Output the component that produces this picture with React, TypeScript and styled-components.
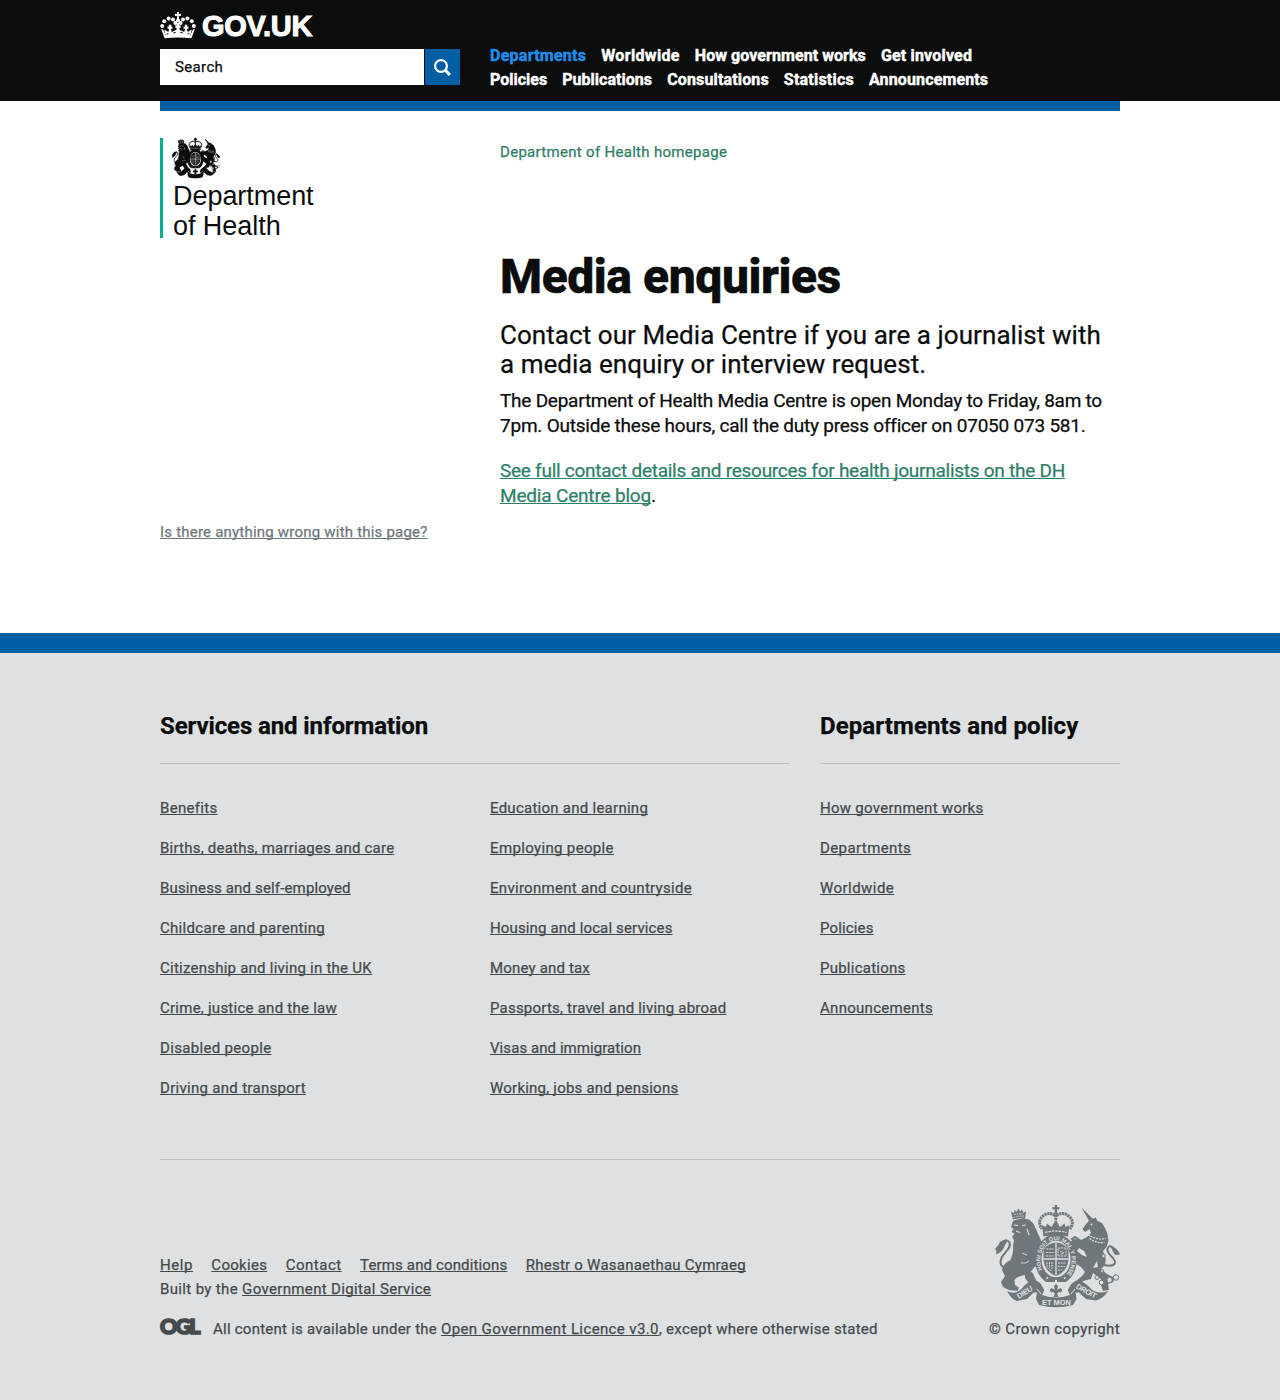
import React from "react";
import styled, { createGlobalStyle } from "styled-components";

const GlobalStyle = createGlobalStyle`
  * { box-sizing: border-box; }
  body {
    margin: 0;
    background: #fff;
    color: #0b0c0c;
    font-family: Roboto, "Liberation Sans", sans-serif;
    -webkit-text-stroke: 0.25px;
  }
  a { color: inherit; }
  ul { list-style: none; margin: 0; padding: 0; }
`;

type Label = [text: string, track: number];

const Track = styled.span<{ $track: number }>`
  letter-spacing: ${(p) => p.$track}px;
  white-space: nowrap;
`;

const Link = styled.a<{ $track?: number; $plain?: boolean }>`
  letter-spacing: ${(p) => p.$track ?? 0}px;
  white-space: nowrap;
  text-decoration: ${(p) => (p.$plain ? "none" : "underline")};
  text-decoration-thickness: 1px;
  text-underline-offset: 1px;
  text-decoration-skip-ink: none;
`;

/* ---------- header ---------- */

const Header = styled.header`
  height: 101px;
  background: #0b0c0c;
  color: #fff;
`;

const Width = styled.div`
  width: 960px;
  margin: 0 auto;
`;

const HeaderInner = styled(Width)`
  display: flex;
  gap: 30px;
`;

const Brand = styled.div`
  width: 300px;
  padding-top: 12px;
`;

const Logo = styled.a`
  display: flex;
  gap: 6px;
  height: 37px;
  color: #fff;
  text-decoration: none;
`;

const LogoText = styled.span`
  font: bold 29px/29px "Liberation Sans", Arial, sans-serif;
  letter-spacing: -0.25px;
  -webkit-text-stroke: 1px #fff;
`;

const SearchForm = styled.form`
  display: flex;
  gap: 1px;
  height: 36px;
`;

const SearchField = styled.div`
  flex: 1;
  padding-left: 15px;
  background: #fff;
  color: #0b0c0c;
  font-size: 15px;
  line-height: 36px;
`;

const SearchButton = styled.button`
  display: flex;
  align-items: center;
  justify-content: center;
  width: 35px;
  padding: 0;
  border: 0;
  background: #005ea5;
`;

const Nav = styled.nav`
  padding-top: 44px;
`;

const NavRow = styled.ul`
  display: flex;
  gap: 15px;
  height: 24px;
  font-size: 16px;
  font-weight: 700;
  line-height: 24px;
`;

const NavItem = styled.li<{ $active: boolean }>`
  color: ${(p) => (p.$active ? "#1d8feb" : "#fff")};
  -webkit-text-stroke-width: 0.45px;
`;

const BlueBar = styled(Width)`
  height: 10px;
  background: #005ea5;
`;

/* ---------- content ---------- */

const Main = styled.main`
  width: 960px;
  height: 522px;
  margin: 0 auto;
  padding-top: 27px;
`;

const Columns = styled.div`
  display: flex;
  height: 382px;
`;

const Side = styled.div`
  width: 340px;
`;

const Department = styled.div`
  display: flex;
  flex-direction: column;
  height: 100px;
  padding-left: 9px;
  border-left: 3px solid #00ad93;
`;

const DepartmentName = styled.div`
  padding: 3px 0 0 1px;
  font: 27px/30px "Liberation Sans", Arial, sans-serif;
  letter-spacing: -0.05px;
  -webkit-text-stroke: 0;
`;

const Article = styled.article`
  width: 620px;
`;

const Crumb = styled.div`
  padding-top: 2px;
  height: 114px;
  color: #2e7d66;
  font-size: 15px;
  line-height: 24px;
`;

const Title = styled.h1`
  margin: 0 0 19px;
  font-size: 48px;
  font-weight: 800;
  line-height: 50px;
  -webkit-text-stroke-width: 0.6px;
`;

const Lead = styled.p`
  margin: 0 0 9px;
  font-size: 26px;
  line-height: 29px;
`;

const Body = styled.p`
  margin: 0 0 20px;
  font-size: 19px;
  line-height: 25px;

  a { color: #2e8068; }
`;

const Feedback = styled.div`
  color: #6f777b;
  font-size: 15px;
  line-height: 24px;
`;

/* ---------- footer ---------- */

const Footer = styled.footer`
  height: 767px;
  padding-top: 58px;
  border-top: 20px solid #005ea5;
  background: #dee0e2;
  color: #454a4c;
  font-size: 15px;
  line-height: 24px;
`;

const Sections = styled.div`
  display: grid;
  grid-template-columns: 630px 300px;
  column-gap: 30px;
  height: 449px;
  border-bottom: 1px solid #bfc1c3;
`;

const SectionTitle = styled.h2`
  height: 53px;
  margin: 0 0 32px;
  border-bottom: 1px solid #bfc1c3;
  color: #0b0c0c;
  font-size: 24px;
  font-weight: 700;
  line-height: 30px;
`;

const Lists = styled.div`
  display: grid;
  grid-template-columns: repeat(2, 300px);
  column-gap: 30px;
`;

const Item = styled.li`
  height: 40px;
`;

const Meta = styled.div`
  display: flex;
  justify-content: space-between;
  padding-top: 45px;
`;

const MetaLeft = styled.div`
  padding-top: 48px;
`;

const MetaLinks = styled.ul`
  display: flex;
  gap: 18.4px;
`;

const Licence = styled.div`
  display: flex;
  gap: 12px;
  margin-top: 16px;
`;

const Ogl = styled.span`
  width: 41px;
  font: 900 21.5px/19px Lato, sans-serif;
  letter-spacing: -1.9px;
  -webkit-text-stroke: 1.7px #454a4c;
`;

const MetaRight = styled.div`
  display: flex;
  flex-direction: column;
  align-items: flex-end;
  gap: 10px;
`;

/* ---------- drawings ---------- */

const Arms = styled.svg`
  flex: none;
  overflow: visible;
  -webkit-text-stroke: 0;
`;

const Crown = () => (
  <svg width="36" height="27" viewBox="0 0 36 27" fill="#fff">
    <path d="M16.9 0h2.2l-.4 2.1 2.3-.4v2.4l-2.3-.4.5 3.6h-2.4l.5-3.6-2.3.4V1.7l2.3.4z" />
    {[[2.2, 14], [4.2, 9.2], [8.6, 6.5], [13, 7.6], [15.4, 11], [33.8, 14], [31.8, 9.2], [27.4, 6.5], [23, 7.6], [20.6, 11]].map(
      ([x, y]) => (
        <circle key={`${x}`} cx={x} cy={y} r="2" />
      )
    )}
    <circle cx="18" cy="8.5" r="1.9" />
    <path d="M1 16.5l2.4 1.6L6 24.3q12-1.7 24 0l2.6-6.2 2.4-1.6-3.6 9.7q-13.4-1.6-26.8 0z" />
    <path d="M4.2 17.5l4.2 2.6.7-3.3-1.5.3v-2.8l1.5.4-.5-2h2.8l-.5 2 1.5-.4v2.8l-1.5-.3.8 3.3 4.5-2 .6-2.3-1.4.3v-3l1.5.4-.5-2.4h3.2l-.5 2.4 1.5-.4v3l-1.4-.3.6 2.3 4.5 2 .8-3.3-1.5.3v-2.8l1.5.4-.5-2h2.8l-.5 2 1.5-.4v2.8l-1.5-.3.7 3.3 4.2-2.6-1.7 7.5q-12.2-1.7-24.4 0z" />
    <path d="M6.2 22.6l1.2-1.6 1.6 1.1zM12.7 21.3l1.9-1.6 1.7 1.4zM29.8 22.6l-1.2-1.6-1.6 1.1zM23.3 21.3l-1.9-1.6-1.7 1.4z" fill="#0b0c0c" />
  </svg>
);

const Magnifier = () => (
  <svg width="17" height="17" viewBox="0 0 17 17" fill="none" stroke="#fff">
    <circle cx="7" cy="7" r="5.9" strokeWidth="2.2" />
    <path d="M11.2 11.2l4.7 4.7" strokeWidth="3" />
  </svg>
);

type ArmsProps = { width: number; height: number; ink: string; paper: string; motto?: boolean };

const RoyalArms = ({ width, height, ink, paper, motto }: ArmsProps) => (
  <Arms width={width} height={height} viewBox="0 0 125 102" preserveAspectRatio="none" fill={ink} stroke={motto ? "none" : ink} strokeWidth={motto ? 0 : 1.4}>
    <defs>
      <path id="garter-line" d="M47.3 64.5A15.6 19.8 0 1 1 74.7 64.5L72 69" />
    </defs>

    {/* lion */}
    <path d="M18 14.5L16 6.5l3 1.8.6-3.3 2.2 1.8 1.4-3.3 2 3 2-2.3.9 3.5 2.9-1.2-1 7.5q-6-1.5-12 .5z" />
    <path d="M18.5 12.6q5-1.9 10.5-1.5M19.5 9.5l8-.9" stroke={paper} strokeWidth=".9" strokeDasharray="1.5 .8" fill="none" />
    <path d="M17 19L18 16Q25 12.5 34 14.5L38 18L41 24L43 29L45.5 34L47 39L44.5 46L42 51L46 56L47 64L40 61.5L38 64Q35.5 68 30.5 70Q22 71 19.5 75L20 80L24 82.5L22.5 86L14 85L8 82L6 77L10 71L7 65Q8.500 58 15.5 55Q19 48 18 41L19 35L17 32L19.5 28.5L16.5 27L18.5 24L16 22z" />
    <path d="M30 67Q38 65 39 71L42 77L46 80L42 83L35 79.5L30 73z" />
    <path d="M19 20l4 .5M27 20.5l3.5-.5M21 26l4 1.5M32 24l2 6" stroke={paper} strokeWidth="1.1" />
    <path d="M26 58q5 1 8-2M27 48l5 2" stroke={paper} strokeWidth=".9" fill="none" />
    <path d="M12 63Q3 62 6.5 53C9 47 17 43 14.5 37.5Q12 33.5 8 37" fill="none" stroke={ink} strokeWidth="2" />
    <path d="M12.5 36Q5 34 4 39L0 44L1.5 46L1 49.5Q8 47 10 40z" />

    {/* unicorn */}
    <path d="M86.5 2.5L98.5 14.5L95 17.5z" />
    <path d="M94.5 15L101 12.5L102 15.5L107 18L110 23L112.5 29L113.5 36L111.5 42L108 46L110.5 53Q111.5 60 106 64L112 69L120 73L118 77L113 79L114 85L108 86L106 80L108 76L102 71L98 68L96 74L88 76L86 80L78 81.5L81 76L87 71L90 67L86 62L80 58L77 50L73 46L76 42L73 38L80 34L86 35L92 32L96 28L94.5 24L90 27L87.5 24L91.5 18.5z" />
    <path d="M84 43l5 3 3 6-5-2-5-4zM98 63l4-7 1 6z" fill={paper} stroke="none" />
    <path d="M93 29.5q8 6 18 4M94.5 33.5q7 5 15 4" fill="none" stroke={paper} strokeWidth="1.2" strokeDasharray="2 1" />
    <circle cx="96.5" cy="19.5" r=".9" fill={paper} stroke="none" />
    <path d="M80 52L72 47L73 42M82 38L77 34L80 32L86 36" stroke={ink} strokeWidth="2" fill="none" />
    <path d="M109 60Q118 62 120 58C121 53 111 49 112.5 44Q114 39 118 43L119 47" fill="none" stroke={ink} strokeWidth="2" />
    <path d="M115 40Q122 43 125 49Q122 51 119 49Q118 44 115 42z" />
    <g fill={paper} stroke={ink} strokeWidth="1">
      <circle cx="102" cy="72.5" r="2" />
      <circle cx="106.5" cy="77.5" r="2.3" />
      <circle cx="114.5" cy="75" r="2.7" />
      <circle cx="121" cy="72.5" r="2.7" />
      <circle cx="108.5" cy="51" r="1.7" />
      <circle cx="107" cy="66" r="1.5" />
    </g>

    {/* crown */}
    <path d="M59.5 0h2.8l-.3 2.3 2.3-.3v2.6l-2.3-.3.3 3.5h-2.8l.4-3.5-2.5.3V2l2.5.3z" />
    <g fill="none" stroke={ink}>
      <path d="M60 10.5Q54 6.5 48.5 10.5Q41.5 16 47 24M61.5 10.5Q68 6.5 73 10.5Q80.5 16 75 24" strokeWidth="3" strokeDasharray="2.3 .6" />
      <path d="M60.8 7v15" strokeWidth="2.8" strokeDasharray="2.3 .6" />
    </g>
    <path d="M47 20l4 2 1-3.5 2.5 2 2 1.5 2.8-4.5h3L65 22l2-1.5 2.5-2 1 3.5 4-2-1.5 11.5q-12-3-24.5 0z" />
    <path d="M50 27.5q11-3 21.5 0" stroke={paper} strokeWidth="1.2" fill="none" strokeDasharray="2.5 .9" />

    {/* garter and shield */}
    <ellipse cx="61" cy="54.5" rx="21" ry="25.5" />
    <ellipse cx="61" cy="54" rx="14.5" ry="18.3" fill={paper} stroke="none" />
    <path d="M48.5 45Q53 37.5 61 37.5T73.5 45V55Q72 67 61 71Q50 67 48.5 55z" />
    <path d="M61 38V70M48.5 54H73.5" stroke={paper} strokeWidth="1.3" />
    <g fill="none" stroke={paper} strokeWidth=".9">
      <path d="M51 44h8M51 47.5h8M51 51h8M63 51v-8h8v8zM65 46l4 2-4 1.5M63 58h8M63 61.5h7M63 65h4M52 57v5q2 3 5 4M54.5 57v6M57 57v7" strokeDasharray="2 .7" />
    </g>
    <path d="M51.5 72.5l1.5 1M60 76h2M69 73.5l1.5-1" stroke={paper} strokeWidth="1.8" />
    {motto && (
      <text fill={paper} fontFamily="Liberation Sans, sans-serif" fontWeight="700" fontSize="5.7">
        <textPath href="#garter-line">HONI SOIT QUI MAL Y PENSE</textPath>
      </text>
    )}

    {/* scroll */}
    <path d="M12 86Q19 90 26 84.5Q32 76.5 39 75.5Q45 76 47 81L51 88.5H71L75 81Q78 76 83 75.5Q90 76.5 96 84Q103 90 113 86Q108 94 101 95.5L91 94L84 87.5L80.5 87.5L81.5 94L78 100Q61 104.5 44 100L41 94L42 87.5L38.5 87.5L32 94L22 96Q16 94 12 86z" />
    <path d="M47 90Q61 95 75 90L73 86V77H49V86z" fill={paper} stroke="none" />
    <path d="M42 84l4 5M80 84l-4 5" stroke={paper} strokeWidth="1" />
    <path d="M61 78.5l2 3-.8 3.3q4.3-3.3 5 .5-.5 3-3 1.7L62 88.5l1.500 3.5h-5l1.500-3.5-2.2-1.500q-2.500 1.300-3-1.700.7-3.800 5-.5L59 81.500z" />
    {motto && (
      <g fill={paper} fontFamily="Liberation Sans, sans-serif" fontWeight="700" fontSize="7.5">
        <text x="47" y="100.3" textLength="29">ET MON</text>
        <text x="24" y="94" textLength="17" transform="rotate(-33 24 94)">DIEU</text>
        <text x="80.5" y="83" textLength="22" transform="rotate(29 80.5 83)">DROIT</text>
      </g>
    )}
  </Arms>
);

/* ---------- data ---------- */

const navRows: Label[][] = [
  [["Departments", 0.26], ["Worldwide", 0.34], ["How government works", 0.06], ["Get involved", 0.18]],
  [["Policies", 0], ["Publications", 0.04], ["Consultations", 0.15], ["Statistics", 0.22], ["Announcements", 0.14]],
];

const services: Label[][] = [
  [
    ["Benefits", 0.31],
    ["Births, deaths, marriages and care", 0.22],
    ["Business and self-employed", 0.15],
    ["Childcare and parenting", 0.3],
    ["Citizenship and living in the UK", 0.24],
    ["Crime, justice and the law", 0.25],
    ["Disabled people", 0.33],
    ["Driving and transport", 0.3],
  ],
  [
    ["Education and learning", 0.26],
    ["Employing people", 0.35],
    ["Environment and countryside", 0.29],
    ["Housing and local services", 0.14],
    ["Money and tax", 0.17],
    ["Passports, travel and living abroad", 0.21],
    ["Visas and immigration", 0.07],
    ["Working, jobs and pensions", 0.22],
  ],
];

const policy: Label[] = [
  ["How government works", 0.28],
  ["Departments", 0.4],
  ["Worldwide", 0.45],
  ["Policies", 0.14],
  ["Publications", 0.24],
  ["Announcements", 0.28],
];

const metaLinks: Label[] = [
  ["Help", 0.55],
  ["Cookies", 0.3],
  ["Contact", 0.52],
  ["Terms and conditions", 0.14],
  ["Rhestr o Wasanaethau Cymraeg", 0.24],
];

const LinkList = ({ items }: { items: Label[] }) => (
  <ul>
    {items.map(([text, track]) => (
      <Item key={text}>
        <Link href="#" $track={track}>{text}</Link>
      </Item>
    ))}
  </ul>
);

export default function App() {
  return (
    <>
      <GlobalStyle />
      <Header>
        <HeaderInner>
          <Brand>
            <Logo href="#">
              <Crown />
              <LogoText>GOV.UK</LogoText>
            </Logo>
            <SearchForm>
              <SearchField><Track $track={0.36}>Search</Track></SearchField>
              <SearchButton type="button" aria-label="Search"><Magnifier /></SearchButton>
            </SearchForm>
          </Brand>
          <Nav>
            {navRows.map((row, r) => (
              <NavRow key={r}>
                {row.map(([text, track], i) => (
                  <NavItem key={text} $active={r === 0 && i === 0}>
                    <Link href="#" $plain $track={track}>{text}</Link>
                  </NavItem>
                ))}
              </NavRow>
            ))}
          </Nav>
        </HeaderInner>
      </Header>
      <BlueBar />

      <Main>
        <Columns>
          <Side>
            <Department>
              <RoyalArms width={48} height={40} ink="#0b0c0c" paper="#fff" />
              <DepartmentName>Department<br />of Health</DepartmentName>
            </Department>
          </Side>
          <Article>
            <Crumb><Link href="#" $plain $track={0.3}>Department of Health homepage</Link></Crumb>
            <Title><Track $track={-0.42}>Media enquiries</Track></Title>
            <Lead>
              <Track $track={0.06}>Contact our Media Centre if you are a journalist with</Track><br />
              <Track $track={0.03}>a media enquiry or interview request.</Track>
            </Lead>
            <Body>
              <Track $track={-0.24}>The Department of Health Media Centre is open Monday to Friday, 8am to</Track><br />
              <Track $track={-0.22}>7pm. Outside these hours, call the duty press officer on 07050 073 581.</Track>
            </Body>
            <Body>
              <Link href="#" $track={-0.26}>See full contact details and resources for health journalists on the DH</Link><br />
              <Link href="#" $track={-0.18}>Media Centre blog</Link>.
            </Body>
          </Article>
        </Columns>
        <Feedback><Link href="#" $track={0.21}>Is there anything wrong with this page?</Link></Feedback>
      </Main>

      <Footer>
        <Width>
          <Sections>
            <section>
              <SectionTitle><Track $track={-0.11}>Services and information</Track></SectionTitle>
              <Lists>
                {services.map((items, i) => <LinkList key={i} items={items} />)}
              </Lists>
            </section>
            <section>
              <SectionTitle><Track $track={0.1}>Departments and policy</Track></SectionTitle>
              <LinkList items={policy} />
            </section>
          </Sections>
          <Meta>
            <MetaLeft>
              <MetaLinks>
                {metaLinks.map(([text, track]) => (
                  <li key={text}><Link href="#" $track={track}>{text}</Link></li>
                ))}
              </MetaLinks>
              <div>
                <Track $track={0.35}>Built by the </Track>
                <Link href="#" $track={0.35}>Government Digital Service</Link>
              </div>
              <Licence>
                <Ogl>OGL</Ogl>
                <div>
                  <Track $track={0.24}>All content is available under the </Track>
                  <Link href="#" $track={0.38}>Open Government Licence v3.0</Link>
                  <Track $track={0.28}>, except where otherwise stated</Track>
                </div>
              </Licence>
            </MetaLeft>
            <MetaRight>
              <RoyalArms width={125} height={102} ink="#6f777b" paper="#dee0e2" motto />
              <Track $track={0.4}>© Crown copyright</Track>
            </MetaRight>
          </Meta>
        </Width>
      </Footer>
    </>
  );
}
